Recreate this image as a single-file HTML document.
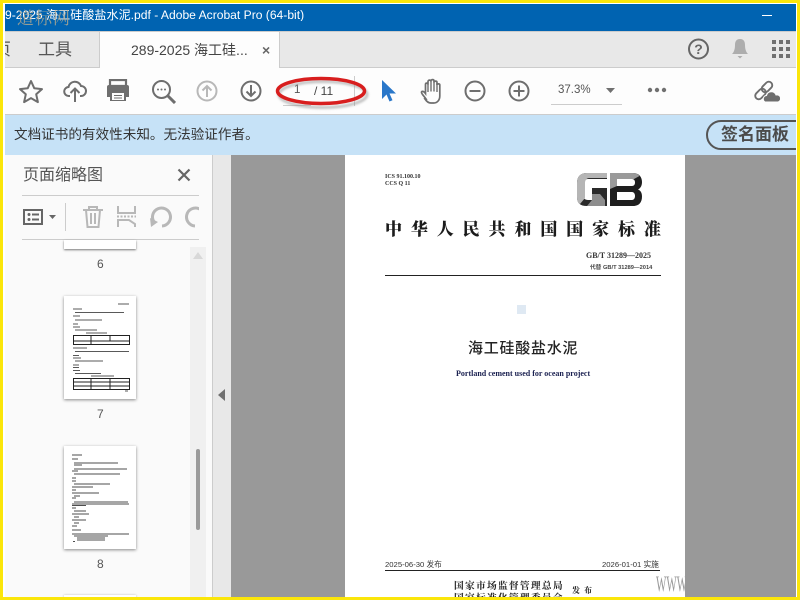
<!DOCTYPE html>
<html><head><meta charset="utf-8">
<style>
*{margin:0;padding:0;box-sizing:border-box}
html,body{width:800px;height:600px;overflow:hidden;background:#fff}
body{position:relative;font-family:"Liberation Sans","Noto Sans CJK SC",sans-serif}
div,span,svg{position:absolute}
.t{white-space:nowrap;line-height:1}
.serif{font-family:"Liberation Serif","Noto Serif CJK SC",serif}
.b{filter:blur(.35px)}
</style></head><body>
<!-- chrome -->
<div style="left:0;top:4px;width:800px;height:27px;background:#0063b1"></div>
<div class="t" style="left:5px;top:9px;width:400px;font-size:12.1px;color:#fff;overflow:hidden">9-2025 海工硅酸盐水泥.pdf - Adobe Acrobat Pro (64-bit)</div>
<div style="left:762px;top:15px;width:10px;height:1px;background:#fff"></div>
<div style="left:0;top:31px;width:800px;height:37px;background:#e8e8e8;border-top:1px solid #ccc;border-bottom:1px solid #ccc"></div>
<div style="left:99px;top:32px;width:181px;height:36px;background:#fdfdfd;border-left:1px solid #ccc;border-right:1px solid #ccc"></div>
<div class="t" style="left:38px;top:41px;font-size:17px;color:#555">工具</div>
<div style="left:5px;top:41px;width:6px;height:17px;overflow:hidden"><span class="t" style="right:0;top:0;font-size:17px;color:#555">页</span></div>
<div class="t" style="left:131px;top:43px;font-size:14px;color:#444">289-2025 海工硅...</div>
<div class="t" style="left:262px;top:43px;font-size:14px;font-weight:bold;color:#666">×</div>
<svg style="left:687px;top:37px" width="24" height="24" viewBox="0 0 24 24"><circle cx="11.500" cy="12" r="9.500" fill="none" stroke="#666" stroke-width="2"/><text x="11.500" y="17" font-size="14" font-weight="bold" fill="#666" text-anchor="middle" font-family="Liberation Sans">?</text></svg>
<svg style="left:730px;top:38px" width="20" height="22" viewBox="0 0 20 22"><path d="M10 1c-4 0-5 3-5 6 0 4-1 7-3 9h16c-2-2-3-5-3-9 0-3-1-6-5-6z" fill="#adadad"/><path d="M7.500 18h5l-2.500 2.500z" fill="#adadad"/></svg>
<svg style="left:771px;top:40px" width="20" height="19" viewBox="0 0 20 19" fill="#707070"><rect x="1" y="0" width="4" height="4"/><rect x="8" y="0" width="4" height="4"/><rect x="15" y="0" width="4" height="4"/><rect x="1" y="7" width="4" height="4"/><rect x="8" y="7" width="4" height="4"/><rect x="15" y="7" width="4" height="4"/><rect x="1" y="14" width="4" height="4"/><rect x="8" y="14" width="4" height="4"/><rect x="15" y="14" width="4" height="4"/></svg>
<!-- toolbar -->
<div style="left:0;top:68px;width:800px;height:47px;background:#fdfdfd;border-bottom:1px solid #ccc"></div>
<svg style="left:18px;top:79px" width="26" height="26" viewBox="0 0 26 26"><path d="M13 2l3.300 7.300 7.700.8-5.800 5.200 1.700 7.800-6.900-4-6.900 4 1.700-7.800L2 10.100l7.700-.8z" fill="none" stroke="#6e6e6e" stroke-width="2" stroke-linejoin="round"/></svg>
<svg style="left:63px;top:78px" width="24" height="26" viewBox="0 0 24 26"><path d="M7 18H6a4.500 4.500 0 0 1-.5-9A6.500 6.500 0 0 1 18 8a5 5 0 0 1 0 10h-1" fill="none" stroke="#6e6e6e" stroke-width="2"/><path d="M12 24V11M7.500 15L12 10.500 16.500 15" fill="none" stroke="#6e6e6e" stroke-width="2"/></svg>
<svg style="left:106px;top:79px" width="24" height="24" viewBox="0 0 24 24"><path d="M4 1h16v6H4z" fill="none" stroke="#6e6e6e" stroke-width="2.200"/><path d="M3 6h18a2 2 0 0 1 2 2v10h-3v4H4v-4H1V8a2 2 0 0 1 2-2z" fill="#6e6e6e"/><rect x="6" y="14" width="12" height="7" fill="#fdfdfd"/><path d="M8 16.500h8M8 19h8" stroke="#6e6e6e"/></svg>
<svg style="left:151px;top:79px" width="25" height="25" viewBox="0 0 25 25"><circle cx="10.500" cy="10.500" r="8.500" fill="none" stroke="#6e6e6e" stroke-width="2"/><path d="M17 17l7 7" stroke="#6e6e6e" stroke-width="3"/><circle cx="7" cy="10.500" r="1" fill="#6e6e6e"/><circle cx="10.500" cy="10.500" r="1" fill="#6e6e6e"/><circle cx="14" cy="10.500" r="1" fill="#6e6e6e"/></svg>
<svg style="left:196px;top:80px" width="22" height="22" viewBox="0 0 22 22"><circle cx="11" cy="11" r="9.500" fill="none" stroke="#b8b8b8" stroke-width="2"/><path d="M11 17V6M6.500 10.500L11 6l4.500 4.500" fill="none" stroke="#b8b8b8" stroke-width="2"/></svg>
<svg style="left:240px;top:80px" width="22" height="22" viewBox="0 0 22 22"><circle cx="11" cy="11" r="9.500" fill="none" stroke="#6e6e6e" stroke-width="2"/><path d="M11 5v11M6.500 11.500L11 16l4.500-4.500" fill="none" stroke="#6e6e6e" stroke-width="2"/></svg>
<div style="left:354px;top:76px;width:1px;height:30px;background:#ccc"></div>
<div style="left:283px;top:105px;width:28px;height:1px;background:#ccc"></div>
<div class="t" style="left:294px;top:85px;font-size:11.500px;color:#555">1</div>
<div class="t" style="left:314px;top:85px;font-size:12px;color:#444">/ 11</div>
<svg style="left:270px;top:72px" width="105" height="42" viewBox="0 0 105 42"><ellipse cx="53" cy="22.500" rx="44" ry="13" fill="none" stroke="#888" stroke-width="3" opacity=".5" style="filter:blur(1px)"/><ellipse cx="51" cy="19" rx="43.500" ry="12.500" fill="none" stroke="#d81e1e" stroke-width="3.500"/></svg>
<svg style="left:380px;top:79px" width="17" height="24" viewBox="0 0 17 24"><path d="M2 1v19l4.500-4.500 3 7 3-1.300-3-6.700H16z" fill="#2a77c9"/></svg>
<svg style="left:419px;top:78px" width="24" height="26" viewBox="0 0 24 26"><path d="M7 21C5 18 2 15.500 2.500 14c.6-1.300 2.500-.6 4 1.500V6.500c0-1.800 2.500-1.800 2.500 0V3.500c0-1.800 3-1.800 3 0V3c0-1.800 3-1.800 3 0v1.500c0-1.800 3-1.800 3 0V7c0-1.500 2.800-1.500 2.800 0v11c0 4-2.500 7-6 7h-3c-3 0-4.500-2-5.800-4z" fill="none" stroke="#6e6e6e" stroke-width="1.700"/><path d="M9 6v8M12 3.500v10M15 3.500v10M18 5v9" stroke="#6e6e6e" stroke-width="1.400"/></svg>
<svg style="left:464px;top:80px" width="22" height="22" viewBox="0 0 22 22"><circle cx="11" cy="11" r="9.500" fill="none" stroke="#6e6e6e" stroke-width="2"/><path d="M5.500 11h11" stroke="#6e6e6e" stroke-width="2"/></svg>
<svg style="left:508px;top:80px" width="22" height="22" viewBox="0 0 22 22"><circle cx="11" cy="11" r="9.500" fill="none" stroke="#6e6e6e" stroke-width="2"/><path d="M5.500 11h11M11 5.500v11" stroke="#6e6e6e" stroke-width="2"/></svg>
<div class="t" style="left:558px;top:85px;font-size:11.500px;color:#555">37.3%</div>
<div style="left:551px;top:104px;width:71px;height:1px;background:#ccc"></div>
<svg style="left:606px;top:88px" width="9" height="6"><path d="M0 0h9L4.500 5z" fill="#707070"/></svg>
<svg style="left:647px;top:87px" width="20" height="6" fill="#707070"><circle cx="3" cy="3" r="2.200"/><circle cx="10" cy="3" r="2.200"/><circle cx="17" cy="3" r="2.200"/></svg>
<svg style="left:753px;top:79px" width="27" height="24" viewBox="0 0 27 24" fill="none" stroke="#6e6e6e" stroke-width="1.900"><rect x="1.500" y="11.500" width="12" height="7" rx="3.500" transform="rotate(-45 7.500 15)"/><rect x="8" y="4.500" width="12" height="7" rx="3.500" transform="rotate(-45 14 8)"/><path d="M12 23a3.500 3.500 0 0 1 1.500-6.500 5 5 0 0 1 9.500-.5 3.500 3.500 0 0 1 2 7z" fill="#6e6e6e" stroke="#fdfdfd" stroke-width="1"/></svg>
<!-- notice -->
<div style="left:0;top:115px;width:800px;height:40px;background:#c6e2f7"></div>
<div class="t" style="left:14px;top:128px;font-size:13.600px;color:#333">文档证书的有效性未知。无法验证作者。</div>
<div style="left:706px;top:120px;width:110px;height:30px;border:2px solid #555;border-radius:15px"></div>
<div class="t" style="left:721px;top:126px;font-size:17px;font-weight:bold;color:#4b4b4b">签名面板</div>
<!-- sidebar -->
<div style="left:5px;top:155px;width:207px;height:445px;background:#fafafa"></div>
<div style="left:212px;top:155px;width:19px;height:445px;background:#e8e8e8;border-left:1px solid #ccc"></div>
<div class="t" style="left:23px;top:168px;font-size:16px;color:#555">页面缩略图</div>
<svg style="left:177px;top:168px" width="14" height="14"><path d="M1.500 1.500l11 11M12.500 1.500l-11 11" stroke="#666" stroke-width="2.200"/></svg>
<div style="left:22px;top:195px;width:177px;height:1px;background:#ccc"></div>
<div style="left:22px;top:239px;width:177px;height:1px;background:#ccc"></div>
<div style="left:65px;top:203px;width:1px;height:28px;background:#ccc"></div>
<svg style="left:23px;top:208px" width="36" height="20" viewBox="0 0 36 20"><rect x="1" y="2" width="18" height="14" fill="none" stroke="#666" stroke-width="2"/><circle cx="6" cy="6.500" r="1.500" fill="#666"/><circle cx="6" cy="11.500" r="1.500" fill="#666"/><path d="M9 6.500h7M9 11.500h7" stroke="#666" stroke-width="2"/><path d="M26 7h7l-3.500 4z" fill="#666"/></svg>
<svg style="left:82px;top:205px" width="22" height="24" viewBox="0 0 22 24" fill="none" stroke="#b8b8b8" stroke-width="2"><path d="M1 5h20M7 5V2h8v3M4 5l1.500 17h11L18 5M9 8v11M13 8v11"/></svg>
<svg style="left:117px;top:206px" width="19" height="22" viewBox="0 0 19 22" fill="none" stroke="#b8b8b8" stroke-width="2"><path d="M1 0v7h17V0M1 21v-7h11l6 4v3"/><path d="M0 10.500h19" stroke-dasharray="2 1.500"/></svg>
<svg style="left:149px;top:206px" width="24" height="23" viewBox="0 0 24 23" fill="none" stroke="#b8b8b8" stroke-width="3"><path d="M5 16A9 9 0 1 1 13 20"/><path d="M1 12l1 9 7-5z" fill="#b8b8b8" stroke="none"/></svg>
<div style="left:184px;top:206px;width:15px;height:23px;overflow:hidden"><svg style="left:0;top:0" width="24" height="23" viewBox="0 0 24 23" fill="none" stroke="#b8b8b8" stroke-width="3"><path d="M19 16A9 9 0 1 0 11 20"/></svg></div>
<!-- scrollbar -->
<div style="left:190px;top:247px;width:16px;height:353px;background:#f0f0f0"></div>
<svg style="left:193px;top:252px" width="10" height="7"><path d="M5 0l5 7H0z" fill="#d8d8d8"/></svg>
<div style="left:196px;top:449px;width:4px;height:81px;background:#9a9a9a;border-radius:2px"></div>
<!-- thumbs -->
<div style="left:64px;top:240px;width:72px;height:9px;background:#fff;box-shadow:0 1px 2px #777"></div>
<div class="t" style="left:97px;top:258px;font-size:12px;color:#555">6</div>
<div style="left:64px;top:296px;width:72px;height:103px;background:#fff;box-shadow:0 1px 3px #888"></div>
<svg class="b" style="left:64px;top:296px" width="72" height="103" viewBox="0 0 72 103" stroke="#222" stroke-width="1" fill="none">
<path d="M54 8h11M9 13h9M11 16.500h49M9 20h7M11 24h27M9 28h5M9 31h7M11 34h22M22 37h21M9 52h14M11 55.500h54M9 59.500h6M9 62h8M11 65h28M9 69h6M9 71.500h6M9 74.500h7M11 77.500h26M27 80h23M61 95h3" opacity=".75"/>
<path d="M9.500 39.500h56v9H9.500zM9.500 45h56M27 39.500v9M46 39.500v5.500" stroke-width="1"/>
<path d="M9.500 82.500h56v11H9.500zM9.500 86h56M9.500 90h56M27 82.500v11M46 82.500v11" stroke-width="1"/></svg>
<div class="t" style="left:97px;top:408px;font-size:12px;color:#555">7</div>
<div style="left:64px;top:446px;width:72px;height:103px;background:#fff;box-shadow:0 1px 3px #888"></div>
<svg class="b" style="left:64px;top:446px" width="72" height="103" viewBox="0 0 72 103" stroke="#222" stroke-width="1" fill="none" opacity=".8">
<path d="M8 9h10M8 13h6M10 17h44M10 19h8M10 23h53M8 25h6M10 28h46M8 32h4M8 35h4M10 38h36M8 41h21M8 44h4M8 47h27M10 50h6M8 52h4M10 56h54M8 58h57M8 59.500h14M8 62h4M10 65h12M8 68h17M10 71h5M8 74h14M10 77h5M8 80h5M8 84h9M8 88h57M10 90h34M13 92h28M13 94h28M9 95.500h2"/></svg>
<div class="t" style="left:97px;top:558px;font-size:12px;color:#555">8</div>
<div style="left:64px;top:595px;width:72px;height:5px;background:#fff;box-shadow:0 0 2px #bbb"></div>
<!-- doc -->
<div style="left:231px;top:155px;width:569px;height:445px;background:#999"></div>
<svg style="left:218px;top:389px" width="8" height="12"><path d="M7 0v12L0 6z" fill="#707070"/></svg>
<div style="left:345px;top:155px;width:340px;height:445px;background:#fff"></div>
<div class="t serif b" style="left:385px;top:174px;font-size:6px;line-height:6.500px;font-weight:bold;color:#333">ICS 91.100.10<br>CCS Q 11</div>
<svg class="b" style="left:570px;top:165px" width="80" height="48" viewBox="0 0 80 48">
<path d="M37 8H17C10 8 7 12 7 18v14c0 6 3 9 10 9h20V23H22v6h8v6H18c-3 0-5-2-5-5V19c0-3 2-5 5-5h19z" fill="#2a2a2a"/>
<path d="M37 8H17C10 8 7 12 7 18v14c0 4 1 6 3 7l5-6V18c0-3 2-5 4-5h18z" fill="#b5b5b5"/>
<path d="M22 29h8l5 6v6H17l5-6z" fill="#8d8d8d"/>
<path d="M40 8h23c6 0 9 4 9 9 0 3-1 6-4 7.500 3 1 4 4 4 7 0 6-3 9.500-9 9.500H40zM47 14v7h15c2 0 3-1.500 3-3.500S64 14 62 14zM47 27v8h15c2 0 3-2 3-4s-1-4-3-4z" fill="#1e1e1e" fill-rule="evenodd"/>
<path d="M40 8h23c3 0 5 1 6.500 3L64 14H47v7l-7 3z" fill="#9a9a9a"/></svg>
<div class="t serif b" style="left:385px;top:221px;width:276px;font-size:17px;font-weight:bold;color:#1c1c1c;display:flex;justify-content:space-between"><b>中</b><b>华</b><b>人</b><b>民</b><b>共</b><b>和</b><b>国</b><b>国</b><b>家</b><b>标</b><b>准</b></div>
<div class="t serif b" style="left:586px;top:252px;font-size:8px;font-weight:bold;color:#333">GB/T 31289—2025</div>
<div class="t b" style="left:590px;top:266px;font-size:5.700px;color:#444;font-weight:bold">代替 GB/T 31289—2014</div>
<div style="left:385px;top:275px;width:276px;height:1px;background:#222"></div>
<div class="b" style="left:517px;top:305px;width:9px;height:9px;background:#dfe9f3"></div>
<div class="t b" style="left:468px;top:341px;font-size:15px;letter-spacing:.75px;color:#222;font-weight:500">海工硅酸盐水泥</div>
<div class="t serif b" style="left:456px;top:370px;font-size:8px;font-weight:bold;color:#1a2050">Portland cement used for ocean project</div>
<div class="t b" style="left:385px;top:561px;font-size:7.700px;color:#333">2025-06-30 发布</div>
<div class="t b" style="left:602px;top:561px;font-size:7.700px;color:#333">2026-01-01 实施</div>
<div style="left:385px;top:570px;width:275px;height:1px;background:#222"></div>
<div class="t serif b" style="left:454px;top:582px;font-size:9.700px;letter-spacing:1.300px;font-weight:bold;color:#222">国家市场监督管理总局</div>
<div class="t serif b" style="left:454px;top:594px;font-size:9.700px;letter-spacing:1.300px;font-weight:bold;color:#222">国家标准化管理委员会</div>
<div class="t serif b" style="left:572px;top:587px;font-size:8px;letter-spacing:4px;font-weight:bold;color:#222">发布</div>
<div style="left:656px;top:573px;width:29px;height:20px;overflow:hidden"><span class="t serif" style="left:0;top:0;font-size:22px;color:#999;transform:scaleX(.5);transform-origin:left top">WWW</span></div>
<!-- watermark -->
<div class="t" style="left:17px;top:10px;font-size:17px;letter-spacing:1px;color:#b0a890;opacity:.85;font-family:'Liberation Serif','Noto Serif CJK SC',serif">道标网</div>
<!-- frame -->
<div style="left:0;top:0;width:800px;height:3px;background:#fbe60a"></div>
<div style="left:0;top:3px;width:800px;height:1px;background:#fff"></div>
<div style="left:0;top:597px;width:800px;height:3px;background:#fbe60a"></div>
<div style="left:0;top:0;width:3px;height:600px;background:#fbe60a"></div>
<div style="left:3px;top:3px;width:2px;height:594px;background:#fff"></div>
<div style="left:797px;top:0;width:3px;height:600px;background:#fbe60a"></div>
<div style="left:796px;top:3px;width:1px;height:594px;background:#fff"></div>
</body></html>
